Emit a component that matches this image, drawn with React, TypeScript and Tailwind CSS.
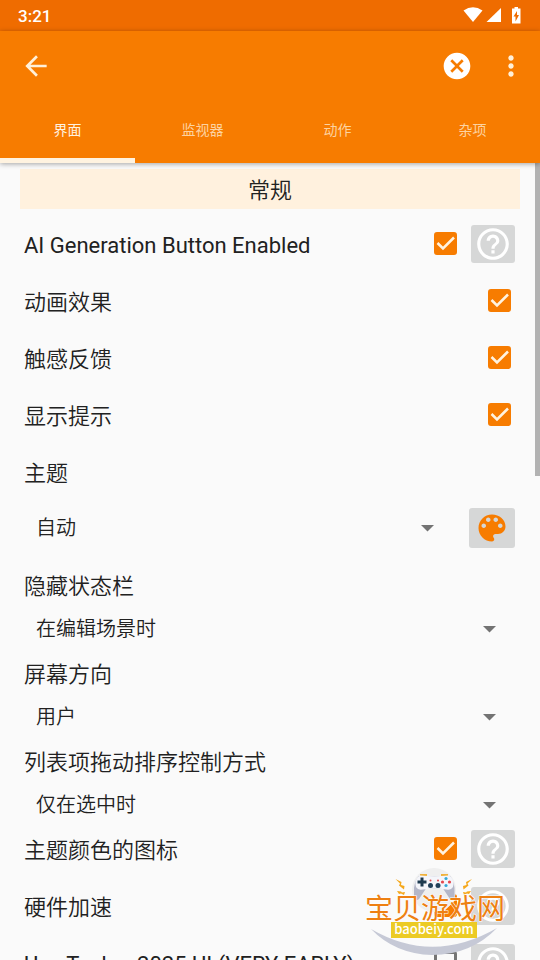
import { useState } from "react";
import type { ReactNode } from "react";

const TABS = ["界面", "监视器", "动作", "杂项"];

function StatusBar() {
  return (
    <div className="flex h-[31px] shrink-0 items-center justify-between bg-[#ef6c00] px-[18px] text-white">
      <span className="pt-[2px] text-[17px] font-medium">3:21</span>
      <svg width="60" height="20" viewBox="0 0 60 20" fill="currentColor" aria-hidden="true">
        <path d="M1.500 4.500Q11 -2 20.500 4.500L11 16z" />
        <path d="M39 2v14H24.500z" />
        <path d="M50 2.500h2.500V1h3.500v1.500h2.500v15H50v-15z" />
        <path d="M55 5l-3.500 5.500h2v5l3.500-6.500h-2z" fill="#ef6c00" />
      </svg>
    </div>
  );
}

function Toolbar() {
  return (
    <div className="flex h-[70px] items-center px-5">
      <button aria-label="返回" className="flex h-10 w-8 items-center justify-center text-[#fff0d9]">
        <svg width="32" height="32" viewBox="0 0 24 24" fill="currentColor">
          <path d="M20 11H7.830l5.590-5.590L12 4l-8 8 8 8 1.410-1.410L7.830 13H20v-2z" />
        </svg>
      </button>
      <div className="flex-1" />
      <button aria-label="取消" className="flex size-8 items-center justify-center text-white">
        <svg width="32" height="32" viewBox="0 0 24 24" fill="currentColor">
          <path d="M12 2C6.470 2 2 6.470 2 12s4.470 10 10 10 10-4.470 10-10S17.530 2 12 2zm5 13.590L15.590 17 12 13.410 8.410 17 7 15.590 10.590 12 7 8.410 8.410 7 12 10.590 15.590 7 17 8.410 13.410 12 17 15.590z" />
        </svg>
      </button>
      <button
        aria-label="更多选项"
        className="-mr-[7px] ml-[22px] flex size-8 items-center justify-center text-[#fff0d9]"
      >
        <svg width="32" height="32" viewBox="0 0 24 24" fill="currentColor">
          <path d="M12 8c1.100 0 2-.9 2-2s-.9-2-2-2-2 .9-2 2 .9 2 2 2zm0 2c-1.100 0-2 .9-2 2s.9 2 2 2 2-.9 2-2-.9-2-2-2zm0 6c-1.100 0-2 .9-2 2s.9 2 2 2 2-.9 2-2-.9-2-2-2z" />
        </svg>
      </button>
    </div>
  );
}

function HelpButton({ label }: { label: string }) {
  return (
    <button
      aria-label={`${label} 帮助`}
      className="ml-[14px] flex h-[38px] w-11 items-center justify-center rounded-[3px] bg-[#d6d7d7] text-white"
    >
      <svg width="38" height="38" viewBox="0 0 24 24" fill="currentColor">
        <path d="M11 18h2v-2h-2v2zm1-16C6.480 2 2 6.480 2 12s4.480 10 10 10 10-4.480 10-10S17.520 2 12 2zm0 18c-4.410 0-8-3.590-8-8s3.590-8 8-8 8 3.590 8 8-3.590 8-8 8zm0-14c-2.210 0-4 1.790-4 4h2c0-1.100.9-2 2-2s2 .9 2 2c0 2-3 1.750-3 5h2c0-2.250 3-2.500 3-5 0-2.210-1.790-4-4-4z" />
      </svg>
    </button>
  );
}

interface CheckRowProps {
  id: string;
  label: string;
  initial?: boolean;
  help?: boolean;
  latin?: boolean;
}

function CheckRow({ id, label, initial = true, help = false, latin = false }: CheckRowProps) {
  const [checked, setChecked] = useState(initial);
  return (
    <div className={`flex h-12 items-center pl-1 ${help ? "pr-[5px]" : "pr-[9px]"}`}>
      <label htmlFor={id} className={`flex-1 truncate pt-[2px] ${latin ? "font-normal" : ""}`}>
        {label}
      </label>
      <span className="mb-[2px] grid size-[23px] place-items-center">
        <input
          id={id}
          type="checkbox"
          checked={checked}
          onChange={(e) => setChecked(e.target.checked)}
          className="col-start-1 row-start-1 size-[23px] appearance-none rounded-[3px] border-[3px] border-[#757575] checked:border-[#f77c00] checked:bg-[#f77c00]"
        />
        {checked && (
          <svg
            className="pointer-events-none col-start-1 row-start-1"
            width="23"
            height="23"
            viewBox="0 0 23 23"
            fill="none"
            stroke="#fff3e0"
            strokeWidth="2.500"
          >
            <path d="M3.500 11l5.500 5.500L20 5.500" />
          </svg>
        )}
      </span>
      {help && <HelpButton label={label} />}
    </div>
  );
}

interface DropdownProps {
  id: string;
  options: string[];
}

function Dropdown({ id, options }: DropdownProps) {
  return (
    <div className="grid flex-1 items-center">
      <select
        id={id}
        className="col-start-1 row-start-1 h-10 w-full appearance-none bg-transparent pr-12 pl-4 text-xl font-[350]"
      >
        {options.map((o) => (
          <option key={o}>{o}</option>
        ))}
      </select>
      <svg
        className="pointer-events-none col-start-1 row-start-1 mr-6 justify-self-end"
        width="13"
        height="7"
        viewBox="0 0 13 7"
        fill="#737373"
      >
        <path d="M0 0h13L6.500 6.500z" />
      </svg>
    </div>
  );
}

function Field({ id, label, children }: { id: string; label: string; children: ReactNode }) {
  return (
    <div>
      <label htmlFor={id} className="flex h-11 items-center pl-1">
        {label}
      </label>
      <div className="flex h-[42px] items-center">{children}</div>
    </div>
  );
}

function Watermark() {
  return (
    <svg
      className="pointer-events-none absolute right-7 bottom-0"
      width="150"
      height="100"
      viewBox="362 860 150 100"
      aria-hidden="true"
    >
      <circle cx="434" cy="890" r="22" fill="#efefef" />
      {/* sparks */}
      <g fill="#f5a81c">
        <path d="M395.500 879l6 3-.5 3 3.500 1-.5 3.500-5-4 1-2zM397 891l4 .5 1 1 3-.5-1 3-3-1.500-2 .5z" />
        <path d="M472 879l-6 3 .5 3-3.500 1 .5 3.500 5-4-1-2zM471 891l-4 .5-1 1-3-.5 1 3 3-1.500 2 .5z" />
      </g>
      {/* gamepad */}
      <path d="M420 876v-2h7v2zM441 876v-2h7v2z" fill="#f0b23c" />
      <path
        d="M419 876h31q3.500 4 4.500 12v9q-1 4.500-4.500 2l-7-10.500h-17l-7 10.500q-3.500 3-5-2v-9q1-8 5-12z"
        fill="#b4b7c8"
      />
      <path
        d="M420 875.500q14.500 1.500 29 0q5 3 4.500 9t-7 5q-12-2-24 0q-6.500 1-7-5t4.500-9z"
        fill="#f4f5fa"
      />
      <path d="M420.500 877.500h3v3h3v3h-3v3h-3v-3h-3v-3h3z" fill="#1d3a4f" />
      <circle cx="430.500" cy="885.500" r="2.500" fill="#22405a" />
      <circle cx="438" cy="885.500" r="2.500" fill="#22405a" />
      <circle cx="430.500" cy="880.500" r="1" fill="#e5484d" />
      <circle cx="438" cy="880.500" r="1" fill="#e5484d" />
      <circle cx="446" cy="878.500" r="1.600" fill="#35a9d8" />
      <circle cx="446" cy="885.500" r="1.600" fill="#35a9d8" />
      <circle cx="442.500" cy="882" r="1.600" fill="#e5484d" />
      <circle cx="449.500" cy="882" r="1.600" fill="#e5484d" />
      <path d="M371 929q62 36 126-1q-26 27-65 27q-37-1-61-26z" fill="#c6c9d6" />
      <text
        x="435"
        y="919"
        textAnchor="middle"
        className="fill-[#ee8012] stroke-white stroke-1 font-['Noto_Sans_CJK_SC',sans-serif] text-[28px] font-normal [paint-order:stroke]"
      >
        宝贝游戏网
      </text>
      <rect x="391" y="922" width="86" height="16" fill="#eccb24" />
      <text
        x="434"
        y="934"
        textAnchor="middle"
        className="fill-white font-['Noto_Sans_CJK_SC',sans-serif] text-[13px] font-medium"
      >
        baobeiy.com
      </text>
    </svg>
  );
}

export default function App() {
  const [tab, setTab] = useState(0);
  return (
    <div className="relative flex h-screen flex-col overflow-hidden bg-[#fafafa] font-[Roboto,'Noto_Sans_CJK_SC',sans-serif] text-[#212121]">
      <StatusBar />
      <header className="relative z-10 shrink-0 bg-[#f77c00] shadow-[0_1px_5px_rgba(0,0,0,0.35)]">
        <Toolbar />
        <nav className="grid h-[62px] grid-cols-4">
          {TABS.map((t, i) => (
            <button
              key={t}
              onClick={() => setTab(i)}
              className={`border-b-[5px] text-sm ${
                i === tab
                  ? "border-b-[#fff3e0] text-[#fff3e0]"
                  : "border-b-transparent text-[#fdd3a0]"
              }`}
            >
              {t}
            </button>
          ))}
        </nav>
      </header>

      <main className="relative min-h-0 flex-1 overflow-hidden px-5 pt-[6px] text-[22px] font-[350]">
        <h2 className="flex h-10 items-center justify-center bg-[#fff1de] pt-[2px] font-[350]">常规</h2>
        <div className="mt-[11px] flex flex-col gap-[9px]">
          <CheckRow id="ai" label="AI Generation Button Enabled" help latin />
          <CheckRow id="anim" label="动画效果" />
          <CheckRow id="haptic" label="触感反馈" />
          <CheckRow id="tips" label="显示提示" />
          <label htmlFor="theme" className="flex h-12 items-center pt-[2px] pl-1">
            主题
          </label>
        </div>
        <div className="mt-3 mb-4 flex items-center pr-[5px]">
          <Dropdown id="theme" options={["自动", "浅色", "深色"]} />
          <button
            aria-label="选择颜色"
            className="ml-[11px] flex h-10 w-[46px] items-center justify-center rounded-[3px] bg-[#d6d7d7] text-[#f77c00]"
          >
            <svg width="36" height="36" viewBox="0 0 24 24" fill="currentColor">
              <path d="M12 3c-4.970 0-9 4.030-9 9s4.030 9 9 9c.83 0 1.500-.67 1.500-1.500 0-.39-.15-.74-.39-1.010-.23-.26-.38-.61-.38-.99 0-.83.67-1.500 1.500-1.500H16c2.760 0 5-2.240 5-5 0-4.420-4.030-8-9-8zm-5.500 9c-.83 0-1.500-.67-1.500-1.500S5.670 9 6.500 9 8 9.670 8 10.500 7.330 12 6.500 12zm3-4C8.670 8 8 7.330 8 6.500S8.670 5 9.500 5s1.500.67 1.500 1.500S10.330 8 9.500 8zm5 0c-.83 0-1.500-.67-1.500-1.500S13.670 5 14.500 5s1.500.67 1.500 1.500S15.330 8 14.500 8zm3 4c-.83 0-1.500-.67-1.500-1.500S16.670 9 17.500 9s1.500.67 1.500 1.500-.67 1.500-1.500 1.500z" />
            </svg>
          </button>
        </div>
        <div className="flex flex-col gap-[2px]">
          <Field id="statusbar" label="隐藏状态栏">
            <Dropdown id="statusbar" options={["在编辑场景时", "始终", "从不"]} />
          </Field>
          <Field id="orientation" label="屏幕方向">
            <Dropdown id="orientation" options={["用户", "竖屏", "横屏"]} />
          </Field>
          <Field id="drag" label="列表项拖动排序控制方式">
            <Dropdown id="drag" options={["仅在选中时", "始终", "从不"]} />
          </Field>
        </div>
        <div className="-mt-px flex flex-col gap-[9px]">
          <CheckRow id="icons" label="主题颜色的图标" help />
          <CheckRow id="hardware" label="硬件加速" help />
          <CheckRow id="newui" label="Use Tasker 2025 UI (VERY EARLY)" initial={false} help latin />
        </div>
        <div className="absolute top-0 right-0 h-[313px] w-[5px] bg-[#b2b2b2]" />
      </main>
      <Watermark />
    </div>
  );
}
